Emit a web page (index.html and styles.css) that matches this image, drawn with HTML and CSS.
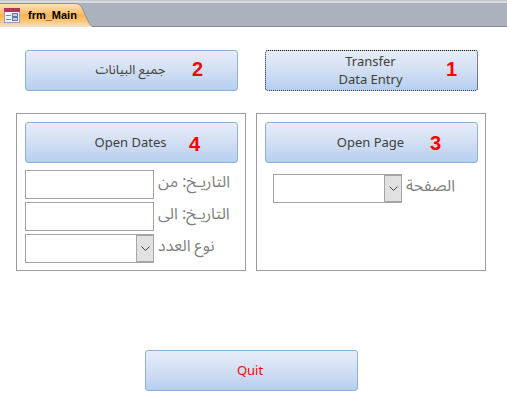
FILE: index.html
```html
<!DOCTYPE html>
<html lang="en">
<head>
    <meta charset="UTF-8">
    <meta name="viewport" content="width=device-width, initial-scale=1.0">
    <title>frm_Main</title>
    <link rel="stylesheet" href="styles.css">
</head>
<body>
    <header class="tabbar">
        <div class="tab">
            <svg class="tab-shape" viewBox="0 0 94 24" width="94" height="24" aria-hidden="true">
                <defs>
                    <linearGradient id="tabFill" x1="0" y1="0" x2="0" y2="1">
                        <stop offset="0" stop-color="#fce3c0"/>
                        <stop offset="0.35" stop-color="#fdc57e"/>
                        <stop offset="0.5" stop-color="#fdb355"/>
                        <stop offset="0.75" stop-color="#fec778"/>
                        <stop offset="1" stop-color="#f0e2cb"/>
                    </linearGradient>
                </defs>
                <path d="M0 .5H75C80 .5 81 3 83 7L88 18C90 22 91 23.5 94 23.5V24H0Z" fill="url(#tabFill)"/>
                <path d="M0 .5H75C80 .5 81 3 83 7L88 18C90 22 91 23.5 94 23.5" fill="none" stroke="#8a8f99"/>
            </svg>
            <svg class="tab-icon" viewBox="0 0 16 15" width="16" height="15" aria-hidden="true">
                <rect width="16" height="15" fill="#8f9fc4"/>
                <rect width="16" height="4" fill="#a8395a"/>
                <rect x="1" y="4" width="14" height="10" fill="#eef3fc"/>
                <path d="M2 7.5H7M2 11.5H7" stroke="#7288b5"/>
                <rect x="8.5" y="5.5" width="5" height="3" fill="#c3d0ea" stroke="#5f77ab"/>
                <rect x="8.5" y="9.5" width="5" height="3" fill="#c3d0ea" stroke="#5f77ab"/>
            </svg>
            <span class="tab-title">frm_Main</span>
        </div>
    </header>

    <main class="form">
        <div class="cell">
            <button type="button" class="btn arabic" lang="ar">جميع البيانات</button>
            <span class="num num-left">2</span>
        </div>
        <div class="cell">
            <button type="button" class="btn focused">Transfer<br>Data Entry</button>
            <span class="num num-one">1</span>
        </div>

        <section class="panel">
            <div class="holder">
                <button type="button" class="btn">Open Dates</button>
                <span class="num num-four">4</span>
            </div>
            <div class="fields">
                <div class="field">
                    <input type="text" id="dateFrom" class="box">
                    <label for="dateFrom" lang="ar" dir="rtl">التاريـخ: من</label>
                </div>
                <div class="field">
                    <input type="text" id="dateTo" class="box">
                    <label for="dateTo" lang="ar" dir="rtl">التاريـخ: الى</label>
                </div>
                <div class="field">
                    <div class="combo">
                        <select id="issueType" class="box"><option></option></select>
                        <span class="arrow"><svg viewBox="0 0 9 6" width="9" height="6"><path d="M.5 .5L4.5 4.5L8.5 .5"/></svg></span>
                    </div>
                    <label for="issueType" lang="ar" dir="rtl">نوع العدد</label>
                </div>
            </div>
        </section>

        <section class="panel">
            <div class="holder">
                <button type="button" class="btn">Open Page</button>
                <span class="num num-three">3</span>
            </div>
            <div class="fields fields-page">
                <div class="field">
                    <div class="combo">
                        <select id="page" class="box"><option></option></select>
                        <span class="arrow"><svg viewBox="0 0 9 6" width="9" height="6"><path d="M.5 .5L4.5 4.5L8.5 .5"/></svg></span>
                    </div>
                    <label for="page" lang="ar" dir="rtl">الصفحة</label>
                </div>
            </div>
        </section>

        <div class="quit">
            <button type="button" class="btn btn-quit">Quit</button>
        </div>
    </main>
</body>
</html>
```
FILE: styles.css
```css
* {
    box-sizing: border-box;
}

body {
    margin: 0;
    background: #ffffff;
    font-family: "Noto Sans", "Open Sans", sans-serif;
    font-size: 13px;
    color: #404040;
}

/* tab strip */
.tabbar {
    height: 27px;
    padding-top: 3px;
    background: #abb1bd;
    background-image: linear-gradient(#c6c8ce 1px, #dadbe1 1px, #dadbe1 3px, transparent 3px);
    box-shadow: inset 0 -1px 0 #858b99;
}

.tab {
    position: relative;
    display: flex;
    align-items: center;
    gap: 8px;
    width: 94px;
    height: 24px;
    padding-left: 4px;
}

.tab-shape {
    position: absolute;
    top: 0;
    left: 0;
}

.tab-icon,
.tab-title {
    position: relative;
    flex: none;
}

.tab-title {
    font: bold 11px/16px "Liberation Sans", Arial, sans-serif;
    color: #000000;
}

/* form body */
.form {
    display: grid;
    grid-template-columns: 1fr 1fr;
    column-gap: 10px;
    row-gap: 22px;
    padding: 23px 21px 12px 16px;
}

.cell {
    position: relative;
    padding: 0 8px 0 9px;
}

.btn {
    display: block;
    width: 100%;
    height: 41px;
    padding: 0 2px 2px 0;
    border: 1px solid #8eb0da;
    border-radius: 3px;
    background: linear-gradient(#e6edf9, #d2dff3 50%, #b6cff0);
    font: inherit;
    line-height: 18px;
    color: #404040;
    cursor: pointer;
}

.btn:hover {
    background: linear-gradient(#f0f5fc, #c5d9f4);
}

.focused {
    border: 1px dotted #10203c;
    outline: none;
}

.num {
    position: absolute;
    top: 8px;
    font: bold 20px/22px "Liberation Sans", Arial, sans-serif;
    color: #ff0000;
    pointer-events: none;
}

.num-left {
    right: 43px;
}

.num-one {
    right: 29px;
}

.num-three {
    top: 10px;
    right: 37px;
}

.num-four {
    top: 11px;
    right: 38px;
}

.panel {
    min-height: 158px;
    padding: 8px 7px 7px 8px;
    border: 1px solid #9c9c9c;
}

.holder {
    position: relative;
}

.fields {
    display: grid;
    gap: 3px;
    padding-top: 7px;
}

.fields-page {
    padding: 11px 0 0 8px;
}

.field {
    display: flex;
    align-items: flex-start;
    gap: 4px;
}

.field label {
    font-family: "Noto Sans Arabic", "DejaVu Sans", sans-serif;
    font-size: 16px;
    line-height: 24px;
    color: #7f7f7f;
    white-space: nowrap;
}

.box {
    display: block;
    width: 129px;
    height: 29px;
    padding: 0 4px;
    border: 1px solid #a3a3a3;
    border-radius: 0;
    background: #ffffff;
    font: inherit;
}

.combo {
    position: relative;
}

.combo .box {
    appearance: none;
}

.arrow {
    position: absolute;
    top: 1px;
    right: 0;
    display: flex;
    align-items: center;
    justify-content: center;
    width: 18px;
    height: 27px;
    border: 1px solid #a6a6a6;
    background: #e1e1e1;
    pointer-events: none;
}

.arrow path {
    fill: none;
    stroke: #444444;
}

.arabic {
    font-family: "Noto Sans Arabic", "DejaVu Sans", sans-serif;
    font-size: 13px;
}

.quit {
    grid-column: 1 / -1;
    width: 213px;
    margin: 57px auto 0;
}

.btn-quit {
    color: #ff0000;
}
```
